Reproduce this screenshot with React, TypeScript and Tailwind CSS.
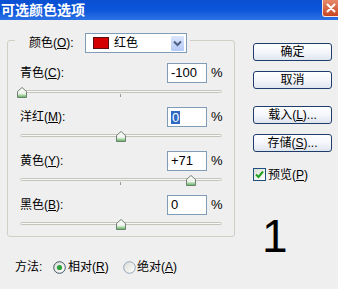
import React from "react";

type Channel = {
  name: string;
  keyChar: string;
  value: number;
  text: string;
  selected?: boolean;
  gap: string;
};

const channels: Channel[] = [
  { name: "青色", keyChar: "C", value: -100, text: "-100", gap: "mt-[10px]" },
  { name: "洋红", keyChar: "M", value: 0, text: "0", selected: true, gap: "mt-0" },
  { name: "黄色", keyChar: "Y", value: 71, text: "+71", gap: "mt-0" },
  { name: "黑色", keyChar: "B", value: 0, text: "0", gap: "mt-0" },
];

function Thumb() {
  return (
    <svg width="10" height="11" viewBox="0 0 10 11">
      <defs>
        <linearGradient id="thumbFill" x1="0" y1="0" x2="0" y2="1">
          <stop offset="0" stopColor="#ffffff" />
          <stop offset="0.6" stopColor="#eef3ea" />
          <stop offset="1" stopColor="#4fae4f" />
        </linearGradient>
      </defs>
      <path d="M5 0.5 L9.5 4.5 L9.5 10.5 L0.5 10.5 L0.5 4.5 Z" fill="url(#thumbFill)" stroke="#6f7f72" strokeWidth="1" />
    </svg>
  );
}

function ChannelRow({ c }: { c: Channel }) {
  const left = 101 + c.value * 0.99 - 5;
  return (
    <div className={c.gap}>
      <div className="flex items-center h-[20px]">
        <span className="w-[159px] pl-[12px] text-[12px] text-black">
          {c.name}(<span className="underline">{c.keyChar}</span>):
        </span>
        <div className="w-[40px] h-[20px] border border-[#7f9db9] bg-white flex items-center pl-[3px] text-[13px] font-['Liberation_Sans',sans-serif]">
          {c.selected ? (
            <span className="bg-[#316ac5] text-white leading-[13px] px-px">{c.text}</span>
          ) : (
            <span>{c.text}</span>
          )}
        </div>
        <span className="ml-[4px] text-[13px] font-['Liberation_Sans',sans-serif]">%</span>
      </div>
      <div className="relative h-[24px] ml-[12px] w-[202px]">
        <div className="pt-[7px]">
          <div className="h-[3px] rounded-full border border-[#c4c4bc] bg-[#f7f7f3]" />
          <div className="ml-[100px] mt-px w-px h-[3px] bg-[#9a9a92]" />
        </div>
        <div className="absolute top-[4px]" style={{ left }}>
          <Thumb />
        </div>
      </div>
    </div>
  );
}

function Radio({ checked }: { checked?: boolean }) {
  return (
    <svg width="13" height="13" viewBox="0 0 13 13">
      <defs>
        <linearGradient id={checked ? "radA" : "radB"} x1="0" y1="0" x2="1" y2="1">
          <stop offset="0" stopColor="#dcdcd6" />
          <stop offset="1" stopColor="#ffffff" />
        </linearGradient>
      </defs>
      <circle cx="6.5" cy="6.5" r="5.8" fill={`url(#${checked ? "radA" : "radB"})`} stroke={checked ? "#3d5366" : "#93a6b8"} strokeWidth="1" />
      {checked && <circle cx="6.5" cy="6.5" r="2.6" fill="#2ea23a" />}
    </svg>
  );
}

function XpButton({ children, gap }: { children: React.ReactNode; gap: string }) {
  return (
    <div
      className={`${gap} h-[18px] rounded-[3px] border border-[#1f3d6b] bg-gradient-to-b from-[#ffffff] via-[#f4f6fb] to-[#dfe5ef] flex items-center justify-center text-[12px] text-black`}
    >
      {children}
    </div>
  );
}

export default function App() {
  return (
    <div className="w-[338px] h-[289px] overflow-hidden bg-[#efefef] font-['Liberation_Sans','Noto_Sans_CJK_SC',sans-serif] text-black select-none">
      {/* title bar */}
      <div className="h-[20px] flex items-start justify-between bg-gradient-to-b from-[#0a4fd2] via-[#0b55da] to-[#2c72e6]">
        <span className="pl-[1px] pt-[1px] text-[14px] leading-[18px] font-bold text-white">可选颜色选项</span>
        <div className="w-[16px] h-[17px] rounded-bl-[3px] border-l border-b border-white/80 bg-gradient-to-b from-[#e5896a] to-[#c7451f] flex items-center justify-center">
          <svg width="10" height="10" viewBox="0 0 10 10">
            <path d="M1.5 1.5 L8.5 8.5 M8.5 1.5 L1.5 8.5" stroke="#ffffff" strokeWidth="2" strokeLinecap="round" />
          </svg>
        </div>
      </div>

      <div className="flex">
        {/* left column */}
        <div className="pl-[7px] w-[235px]">
          <div className="mt-[20px] h-[197px] w-[228px] border border-[#cfcfc6] rounded-[3px]">
            {/* legend row */}
            <div className="-mt-[8px] ml-[7px] w-[175px] h-[20px] bg-[#efefef] flex items-center pl-[14px] pr-[3px]">
              <span className="w-[56px] text-[12px]">
                颜色(<span className="underline">O</span>):
              </span>
              <div className="w-[102px] h-[20px] border border-[#7f9db9] bg-white flex items-center">
                <div className="ml-[7px] w-[16px] h-[12px] bg-[#d40000] border border-[#5a1010]" />
                <span className="ml-[5px] text-[12px] flex-1">红色</span>
                <div className="mr-px w-[15px] h-[17px] rounded-[2px] border border-white bg-gradient-to-b from-[#dbe6fd] to-[#b4c9f5] flex items-center justify-center">
                  <svg width="9" height="7" viewBox="0 0 9 7">
                    <path d="M1 1.5 L4.5 5 L8 1.5" fill="none" stroke="#4d6185" strokeWidth="2" />
                  </svg>
                </div>
              </div>
            </div>
            {channels.map((c) => (
              <ChannelRow key={c.keyChar} c={c} />
            ))}
          </div>

          {/* method row */}
          <div className="mt-[23px] h-[14px] flex items-center text-[12px]">
            <span className="ml-[8px] w-[38px]">方法:</span>
            <Radio checked />
            <span className="ml-[2px] w-[55px]">
              相对(<span className="underline">R</span>)
            </span>
            <Radio />
            <span className="ml-[1px]">
              绝对(<span className="underline">A</span>)
            </span>
          </div>
        </div>

        {/* right column */}
        <div className="ml-[18px] w-[79px] flex flex-col">
          <XpButton gap="mt-[23px]">确定</XpButton>
          <XpButton gap="mt-[10px]">取消</XpButton>
          <XpButton gap="mt-[17px]">
            <span>
              载入(<span className="underline">L</span>)...
            </span>
          </XpButton>
          <XpButton gap="mt-[10px]">
            <span>
              存储(<span className="underline">S</span>)...
            </span>
          </XpButton>
          <div className="mt-[16px] h-[13px] flex items-center text-[12px]">
            <div className="w-[13px] h-[13px] border border-[#1c5180] bg-gradient-to-br from-[#dcdcd6] to-white flex items-center justify-center">
              <svg width="9" height="9" viewBox="0 0 9 9">
                <path d="M1 4.5 L3.5 7 L8 1.5" fill="none" stroke="#21a121" strokeWidth="2" />
              </svg>
            </div>
            <span className="ml-[2px]">
              预览(<span className="underline">P</span>)
            </span>
          </div>
          <div className="mt-[32px] ml-[9px] text-[46px] leading-[46px]">1</div>
        </div>
      </div>
    </div>
  );
}
